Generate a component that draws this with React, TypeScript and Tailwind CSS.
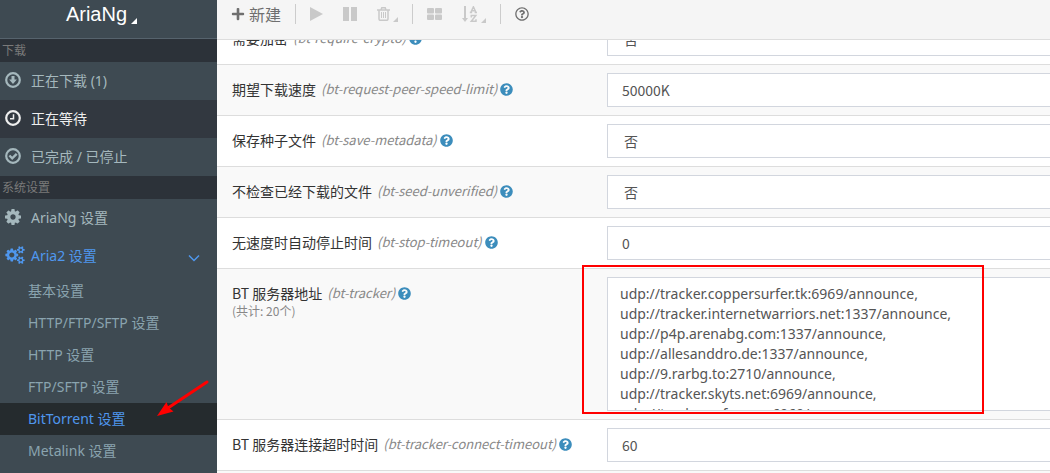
import React from "react";
import { FaPlus, FaQuestionCircle, FaRegQuestionCircle } from "react-icons/fa";

const COG =
  "M1024 896q0-106-75-181t-181-75-181 75-75 181 75 181 181 75 181-75 75-181zm512-109v222q0 12-8 23t-20 13l-185 28q-19 54-39 91 35 50 107 138 10 12 10 25t-9 23q-27 37-99 108t-94 71q-12 0-26-9l-138-108q-44 23-91 38-16 136-29 186-7 28-36 28h-222q-14 0-24.500-8.500t-11.500-21.500l-28-184q-49-16-90-37l-141 107q-10 9-25 9-14 0-25-11-126-114-165-168-7-10-7-23 0-12 8-23 15-21 51-66.500t54-70.500q-27-50-41-99l-183-27q-13-2-21-12.500t-8-23.500v-222q0-12 8-23t19-13l186-28q14-46 39-92-40-57-107-138-10-12-10-24 0-10 9-23 26-36 98.500-107.500t94.500-71.500q13 0 26 10l138 107q44-23 91-38 16-136 29-186 7-28 36-28h222q14 0 24.500 8.500t11.500 21.500l28 184q49 16 90 37l142-107q9-9 24-9 13 0 25 10 129 119 165 170 7 8 7 22 0 12-8 23-15 21-51 66.500t-54 70.500q26 50 41 98l183 28q13 2 21 12.500t8 23.500z";

const COGS =
  "M896 896q0-106-75-181t-181-75-181 75-75 181 75 181 181 75 181-75 75-181zm768 512q0-52-38-90t-90-38-90 38-38 90q0 53 37.500 90.500t90.500 37.500 90.500-37.500 37.500-90.500zm0-1024q0-52-38-90t-90-38-90 38-38 90q0 53 37.500 90.500t90.500 37.500 90.500-37.500 37.500-90.500zm-384 421v185q0 10-7 19.500t-16 10.500l-155 24q-11 35-32 76 34 48 90 115 7 11 7 20 0 12-7 19-23 30-82.500 89.500t-78.500 59.500q-11 0-21-7l-115-90q-37 19-77 31-11 108-23 155-7 24-30 24h-186q-11 0-20-7.500t-10-17.500l-23-153q-34-10-75-31l-118 89q-7 7-20 7-11 0-21-8-144-133-144-160 0-9 7-19 10-14 41-53t47-61q-23-44-35-82l-152-24q-10-1-17-9.500t-7-19.500v-185q0-10 7-19.500t16-10.500l155-24q11-35 32-76-34-48-90-115-7-11-7-20 0-12 7-20 22-30 82-89t79-59q11 0 21 7l115 90q34-18 77-32 11-108 23-154 7-24 30-24h186q11 0 20 7.500t10 17.500l23 153q34 10 75 31l118-89q8-7 20-7 11 0 21 8 144 133 144 160 0 8-7 19-12 16-42 54t-45 60q23 48 34 82l152 23q10 2 17 10.500t7 19.500zm640 533v140q0 16-149 31-12 27-30 52 51 113 51 138 0 4-4 7-122 71-124 71-8 0-46-47t-52-68q-20 2-30 2t-30-2q-14 21-52 68t-46 47q-2 0-124-71-4-3-4-7 0-25 51-138-18-25-30-52-149-15-149-31v-140q0-16 149-31 13-29 30-52-51-113-51-138 0-4 4-7 4-2 35-20t59-34 30-16q8 0 46 46.500t52 67.500q20-2 30-2t30 2q51-71 92-112l6-2q4 0 124 70 4 3 4 7 0 25-51 138 17 23 30 52 149 15 149 31zm0-1024v140q0 16-149 31-12 27-30 52 51 113 51 138 0 4-4 7-122 71-124 71-8 0-46-47t-52-68q-20 2-30 2t-30-2q-14 21-52 68t-46 47q-2 0-124-71-4-3-4-7 0-25 51-138-18-25-30-52-149-15-149-31v-140q0-16 149-31 13-29 30-52-51-113-51-138 0-4 4-7 4-2 35-20t59-34 30-16q8 0 46 46.500t52 67.500q20-2 30-2t30 2q51-71 92-112l6-2q4 0 124 70 4 3 4 7 0 25-51 138 17 23 30 52 149 15 149 31z";

function RingIcon({ children }: { children: React.ReactNode }) {
  return (
    <svg viewBox="0 0 16 16" className="size-4" fill="none" stroke="currentColor" strokeWidth="2.2">
      <circle cx="8" cy="8" r="6.8" />
      {children}
    </svg>
  );
}

const DownIcon = () => (
  <RingIcon>
    <path d="M6.500 4h3v3.600h2.400L8 12 4.100 7.600h2.400z" fill="currentColor" stroke="none" />
  </RingIcon>
);
const ClockIcon = () => (
  <RingIcon>
    <path d="M8.500 4.200v4.500H5" strokeWidth="1.500" />
  </RingIcon>
);
const CheckIcon = () => (
  <RingIcon>
    <path d="M4.400 7.500l2.800 2.800 4.500-4.500" strokeWidth="2.400" />
  </RingIcon>
);
const CogIcon = () => (
  <svg viewBox="0 128 1536 1536" className="size-4" fill="currentColor">
    <path d={COG} />
  </svg>
);
const CogsIcon = () => (
  <svg viewBox="0 0 1920 1792" className="h-[18px] w-5" fill="currentColor">
    <path d={COGS} />
  </svg>
);

function Corner({ className = "-mb-px size-[5px]" }: { className?: string }) {
  return (
    <svg viewBox="0 0 6 6" className={className} fill="currentColor">
      <path d="M6 0v6H0z" />
    </svg>
  );
}

function Section({ children }: { children: React.ReactNode }) {
  return <h2 className="bg-[#2c3239] px-0.5 text-xs leading-[23px] text-[#7a7a7a]">{children}</h2>;
}

type ItemProps = { icon: React.ReactNode; label: string; tone?: string; open?: boolean };

function Item({ icon, label, tone = "text-[#a5b8bd]", open }: ItemProps) {
  return (
    <a href="#" className={`flex h-[38px] items-center pl-[5px] text-sm ${tone}`}>
      <span className="flex w-[26px] shrink-0 pb-0.5">{icon}</span>
      <span className="grow">{label}</span>
      {open && (
        <svg viewBox="0 0 12 8" className="mt-1 mr-[17px] h-2 w-3" fill="none" stroke="currentColor" strokeWidth="1.500">
          <path d="M1 1.500l5 5 5-5" />
        </svg>
      )}
    </a>
  );
}

const SUB_ITEMS = ["基本设置", "HTTP/FTP/SFTP 设置", "HTTP 设置", "FTP/SFTP 设置", "BitTorrent 设置", "Metalink 设置"];

function Sidebar() {
  return (
    <aside className="relative w-[217px] shrink-0 overflow-hidden bg-[#3e4a52] font-['Noto_Sans','Noto_Sans_CJK_SC',sans-serif]">
      <button className="flex h-[39px] w-full items-start justify-center border-b border-[#56636d] pr-3.5 text-white">
        <span className="font-['Liberation_Sans',sans-serif] text-xl leading-[29px]">AriaNg</span>
        <Corner className="mt-[18px] ml-1 size-1.5" />
      </button>
      <nav>
        <Section>下载</Section>
        <Item icon={<DownIcon />} label="正在下载 (1)" />
        <Item icon={<ClockIcon />} label="正在等待" tone="bg-[#323840] text-[#eeeeee]" />
        <Item icon={<CheckIcon />} label="已完成 / 已停止" />
        <Section>系统设置</Section>
        <Item icon={<CogIcon />} label="AriaNg 设置" />
        <Item icon={<CogsIcon />} label="Aria2 设置" tone="text-[#4f97ee]" open />
        <ul>
          {SUB_ITEMS.map((label) => (
            <li key={label}>
              <a
                href="#"
                className={`block h-8 pl-7 text-sm leading-8 ${
                  label.startsWith("Bit") ? "bg-[#252b2e] text-[#4f97ee]" : "text-[#8aa4af]"
                }`}
              >
                {label}
              </a>
            </li>
          ))}
        </ul>
      </nav>
      <svg viewBox="0 0 52 36" className="absolute top-[380px] left-[157px] h-9 w-[52px]">
        <path d="M50 2L11 28" stroke="#ff0000" strokeWidth="3" strokeLinecap="round" />
        <path d="M0 36L9.500 22l1.800 5.200 5.200 4.300z" fill="#ff0000" />
      </svg>
    </aside>
  );
}

function Toolbar() {
  return (
    <header className="relative z-10 flex h-10 shrink-0 items-start border-b border-[#dddddd] bg-[#f5f5f5] text-[#c9c9c9]">
      <div className="mt-1 flex h-5 items-center divide-x divide-[#cccccc]">
        <div className="flex h-5 items-center px-3.5">
          <button className="flex items-center gap-1 text-base leading-5 text-[#6f6f6f]">
            <FaPlus className="size-3.5" />
            新建
          </button>
        </div>
        <div className="flex h-5 items-center gap-5 px-3.5">
          <button disabled aria-label="开始">
            <svg viewBox="0 0 13 14" className="h-3.5 w-[13px]" fill="currentColor">
              <path d="M0 0l13 7-13 7z" />
            </svg>
          </button>
          <button disabled aria-label="暂停">
            <svg viewBox="0 0 14 14" className="size-3.5" fill="currentColor">
              <path d="M0 0h6v14H0zM8 0h6v14H8z" />
            </svg>
          </button>
          <button disabled aria-label="删除" className="flex items-end gap-[3px]">
            <svg viewBox="0 0 13 14" className="h-3.5 w-[13px]" fill="none" stroke="currentColor" strokeWidth="1.500">
              <path d="M0 3h13M4 3l.8-2.200h3.400L9 3M2 3v9q0 1.300 1.200 1.300h6.600q1.200 0 1.200-1.300V3" />
              <path d="M4.500 5v6M6.500 5v6M8.500 5v6" strokeWidth="1" />
            </svg>
            <Corner />
          </button>
        </div>
        <div className="flex h-5 items-center gap-5 px-3.5">
          <button disabled aria-label="显示">
            <svg viewBox="0 0 15 12" className="h-3 w-[15px]" fill="currentColor">
              <rect width="7" height="5.500" rx="1" />
              <rect x="8" width="7" height="5.500" rx="1" />
              <rect y="6.500" width="7" height="5.500" rx="1" />
              <rect x="8" y="6.500" width="7" height="5.500" rx="1" />
            </svg>
          </button>
          <button disabled aria-label="排序" className="flex items-end gap-[3px]">
            <svg viewBox="0 0 16 16" className="size-4" fill="none" stroke="currentColor" strokeWidth="1.500">
              <path d="M3 0v13" strokeWidth="2" />
              <path d="M0 12h6l-3 4z" fill="currentColor" stroke="none" />
              <path d="M8.800 6.500L11.400.8l2.600 5.700M9.800 4.700h3.200M7.800 6.500h2.400M12.600 6.500h2.400" />
              <path d="M9.300 11.500V9.500h4.500L9.300 15.200h4.700v-2" />
            </svg>
            <Corner />
          </button>
        </div>
        <div className="flex h-5 items-center px-3.5">
          <button aria-label="帮助" className="text-[#6f6f6f]">
            <FaRegQuestionCircle className="size-3.5" />
          </button>
        </div>
      </div>
    </header>
  );
}

const TRACKERS = [
  "udp://tracker.coppersurfer.tk:6969/announce,",
  "udp://tracker.internetwarriors.net:1337/announce,",
  "udp://p4p.arenabg.com:1337/announce,",
  "udp://allesanddro.de:1337/announce,",
  "udp://9.rarbg.to:2710/announce,",
  "udp://tracker.skyts.net:6969/announce,",
  "udp://tracker.safe.moe:6969/announce",
].join("\n");

type Setting = { id: string; label: string; kind: "select" | "text" | "area"; value: string; note?: string };

const SETTINGS: Setting[] = [
  { id: "bt-require-crypto", label: "需要加密", kind: "select", value: "否" },
  { id: "bt-request-peer-speed-limit", label: "期望下载速度", kind: "text", value: "50000K" },
  { id: "bt-save-metadata", label: "保存种子文件", kind: "select", value: "否" },
  { id: "bt-seed-unverified", label: "不检查已经下载的文件", kind: "select", value: "否" },
  { id: "bt-stop-timeout", label: "无速度时自动停止时间", kind: "text", value: "0" },
  { id: "bt-tracker", label: "BT 服务器地址", kind: "area", value: TRACKERS, note: "(共计: 20个)" },
  { id: "bt-tracker-connect-timeout", label: "BT 服务器连接超时时间", kind: "text", value: "60" },
];

const FIELD = "block w-full border border-r-0 border-[#d2d6de] bg-white text-sm text-[#555555] outline-none";

function Field({ s }: { s: Setting }) {
  if (s.kind === "select")
    return (
      <select id={s.id} className={`${FIELD} h-[34px] appearance-none px-4`}>
        <option>{s.value}</option>
        <option>是</option>
      </select>
    );
  if (s.kind === "text") return <input id={s.id} defaultValue={s.value} className={`${FIELD} h-[34px] px-3.5`} />;
  return (
    <>
      <textarea
        id={s.id}
        defaultValue={s.value}
        className={`${FIELD} h-[134px] resize-none overflow-hidden px-3 py-1.5 font-['Noto_Sans',sans-serif] leading-5`}
      />
      <div className="pointer-events-none absolute -top-1 -left-[25px] h-[149px] w-[402px] border-2 border-[#ff0000]" />
    </>
  );
}

function Row({ s }: { s: Setting }) {
  return (
    <div className="flex border-b border-[#dddddd] odd:bg-white even:bg-[#f9f9f9]">
      <div className="w-[390px] shrink-0 pt-3.5 pl-[15px]">
        <label htmlFor={s.id} className="flex items-center text-sm leading-5 text-[#333333]">
          {s.label}
          <em className="ml-[5px] text-[13px] leading-5 text-[#888888]">({s.id})</em>
          <FaQuestionCircle className="ml-[3px] size-[13px] text-[#3c8dbc]" />
        </label>
        {s.note && <p className="text-xs leading-4 text-[#888888]">{s.note}</p>}
      </div>
      <div className="relative min-w-0 grow py-2">
        <Field s={s} />
      </div>
    </div>
  );
}

export default function App() {
  return (
    <div className="flex h-screen overflow-hidden bg-white font-['Noto_Sans_CJK_SC',sans-serif]">
      <Sidebar />
      <div className="flex min-w-0 grow flex-col">
        <Toolbar />
        <main className="-mt-[26px] grow bg-[#f9f9f9]">
          {SETTINGS.map((s) => (
            <Row key={s.id} s={s} />
          ))}
        </main>
      </div>
    </div>
  );
}
